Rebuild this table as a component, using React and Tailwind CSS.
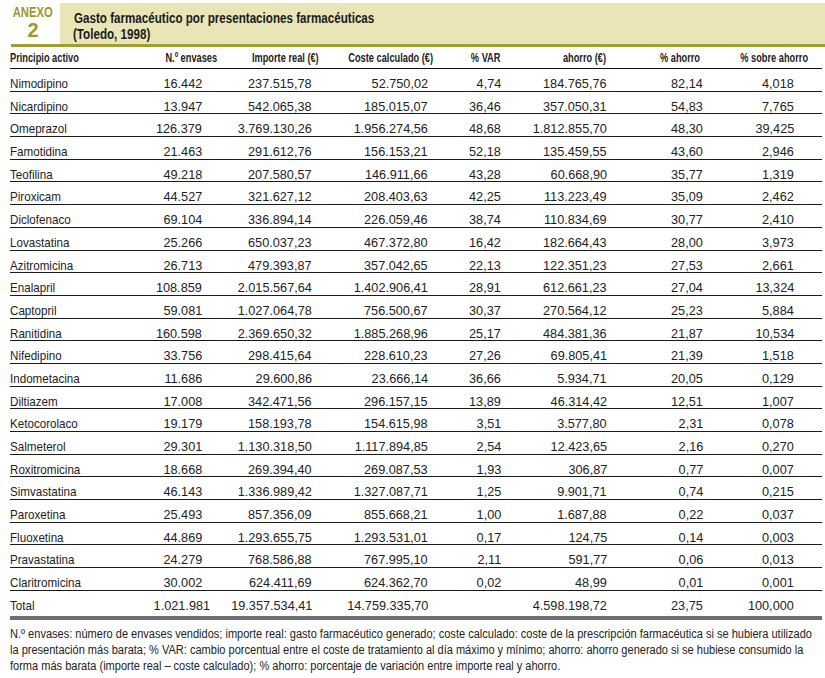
const rows = [
  ['Nimodipino', '16.442', '237.515,78', '52.750,02', '4,74', '184.765,76', '82,14', '4,018'],
  ['Nicardipino', '13.947', '542.065,38', '185.015,07', '36,46', '357.050,31', '54,83', '7,765'],
  ['Omeprazol', '126.379', '3.769.130,26', '1.956.274,56', '48,68', '1.812.855,70', '48,30', '39,425'],
  ['Famotidina', '21.463', '291.612,76', '156.153,21', '52,18', '135.459,55', '43,60', '2,946'],
  ['Teofilina', '49.218', '207.580,57', '146.911,66', '43,28', '60.668,90', '35,77', '1,319'],
  ['Piroxicam', '44.527', '321.627,12', '208.403,63', '42,25', '113.223,49', '35,09', '2,462'],
  ['Diclofenaco', '69.104', '336.894,14', '226.059,46', '38,74', '110.834,69', '30,77', '2,410'],
  ['Lovastatina', '25.266', '650.037,23', '467.372,80', '16,42', '182.664,43', '28,00', '3,973'],
  ['Azitromicina', '26.713', '479.393,87', '357.042,65', '22,13', '122.351,23', '27,53', '2,661'],
  ['Enalapril', '108.859', '2.015.567,64', '1.402.906,41', '28,91', '612.661,23', '27,04', '13,324'],
  ['Captopril', '59.081', '1.027.064,78', '756.500,67', '30,37', '270.564,12', '25,23', '5,884'],
  ['Ranitidina', '160.598', '2.369.650,32', '1.885.268,96', '25,17', '484.381,36', '21,87', '10,534'],
  ['Nifedipino', '33.756', '298.415,64', '228.610,23', '27,26', '69.805,41', '21,39', '1,518'],
  ['Indometacina', '11.686', '29.600,86', '23.666,14', '36,66', '5.934,71', '20,05', '0,129'],
  ['Diltiazem', '17.008', '342.471,56', '296.157,15', '13,89', '46.314,42', '12,51', '1,007'],
  ['Ketocorolaco', '19.179', '158.193,78', '154.615,98', '3,51', '3.577,80', '2,31', '0,078'],
  ['Salmeterol', '29.301', '1.130.318,50', '1.117.894,85', '2,54', '12.423,65', '2,16', '0,270'],
  ['Roxitromicina', '18.668', '269.394,40', '269.087,53', '1,93', '306,87', '0,77', '0,007'],
  ['Simvastatina', '46.143', '1.336.989,42', '1.327.087,71', '1,25', '9.901,71', '0,74', '0,215'],
  ['Paroxetina', '25.493', '857.356,09', '855.668,21', '1,00', '1.687,88', '0,22', '0,037'],
  ['Fluoxetina', '44.869', '1.293.655,75', '1.293.531,01', '0,17', '124,75', '0,14', '0,003'],
  ['Pravastatina', '24.279', '768.586,88', '767.995,10', '2,11', '591,77', '0,06', '0,013'],
  ['Claritromicina', '30.002', '624.411,69', '624.362,70', '0,02', '48,99', '0,01', '0,001'],
]

const total = ['Total', '1.021.981', '19.357.534,41', '14.759.335,70', '', '4.598.198,72', '23,75', '100,000']

// value cells sit a little left of the header's right edge in some columns
const valuePad = ['', 'pr-[8px] text-right', 'pr-[7px] text-right', 'pr-[5px] text-right', 'text-right', 'text-right', 'text-right', 'pr-[28px] text-right']
const headPad = ['', 'text-right', 'text-right', 'text-right', 'pr-[1px] text-right', 'pr-[1px] text-right', 'pr-[3px] text-right', 'pr-[14px] text-right']

const headers = ['Principio activo', 'N.º envases', 'Importe real (€)', 'Coste calculado (€)', '% VAR', 'ahorro (€)', '% ahorro', '% sobre ahorro']

const grid = 'grid grid-cols-[140px_60px_109px_114px_68px_106px_96px_119px]'

function Row({ cells, className }) {
  return (
    <div className={`${grid} items-center border-b border-[#1a1a1a] pt-[5px] ${className}`}>
      {cells.map((c, i) =>
        i === 0 ? (
          <div key={i} className="whitespace-nowrap">
            <span className="inline-block origin-left scale-x-[0.86]">{c}</span>
          </div>
        ) : (
          <div key={i} className={`whitespace-nowrap ${valuePad[i]}`}>
            <span className="inline-block origin-right scale-x-[0.94]">{c}</span>
          </div>
        )
      )}
    </div>
  )
}

export default function App() {
  return (
    <div className="w-[825px] h-[678px] overflow-hidden bg-white pt-[3px] font-['Liberation_Sans',Arial,sans-serif] text-[#222]">
      <div className="flex h-[41px]">
        <div className="w-[60px] pl-[6px] text-center font-bold leading-none text-[#9c982c]">
          <div className="mt-[1px] text-[15px]">
            <span className="inline-block scale-x-[0.75]">ANEXO</span>
          </div>
          <div className="mt-[1px] text-[20px]">2</div>
        </div>
        <div className="flex-1 bg-[#e9e5b6] pl-[13px] pt-[7px] text-[14px] font-bold leading-[16px] text-[#1a1a1a]">
          <div className="whitespace-nowrap pl-px">
            <span className="inline-block origin-left scale-x-[0.83]">Gasto farmacéutico por presentaciones farmacéuticas</span>
          </div>
          <div className="whitespace-nowrap">
            <span className="inline-block origin-left scale-x-[0.83]">(Toledo, 1998)</span>
          </div>
        </div>
      </div>
      <div className="ml-[11px] h-[3px] bg-[#a39e32]" />

      <div className="ml-[10px] w-[812px] text-[13.5px]">
        <div className={`${grid} h-[22px] items-center border-b border-[#111] pt-[1px] text-[12px] font-bold`}>
          {headers.map((h, i) => (
            <div key={i} className={`whitespace-nowrap ${headPad[i]}`}>
              <span className={i === 0 ? 'inline-block origin-left scale-x-[0.77]' : 'inline-block origin-right scale-x-[0.77]'}>{h}</span>
            </div>
          ))}
        </div>
        {rows.map((r) => (
          <Row key={r[0]} cells={r} className="h-[22.7px]" />
        ))}
        <Row cells={total} className="h-[25px] border-b-0" />
        <div className="h-[4px] bg-[#6f6f6f]" />
      </div>

      <div className="ml-[10px] mt-[6px] w-[812px] text-[12.5px] leading-[16px] text-[#222]">
        <div className="whitespace-nowrap">
          <span className="inline-block origin-left scale-x-[0.882]">
            N.º envases: número de envases vendidos; importe real: gasto farmacéutico generado; coste calculado: coste de la prescripción farmacéutica si se hubiera utilizado
          </span>
        </div>
        <div className="whitespace-nowrap">
          <span className="inline-block origin-left scale-x-[0.882]">
            la presentación más barata; % VAR: cambio porcentual entre el coste de tratamiento al día máximo y mínimo; ahorro: ahorro generado si se hubiese consumido la
          </span>
        </div>
        <div className="whitespace-nowrap">
          <span className="inline-block origin-left scale-x-[0.882]">
            forma más barata (importe real – coste calculado); % ahorro: porcentaje de variación entre importe real y ahorro.
          </span>
        </div>
      </div>
    </div>
  )
}
